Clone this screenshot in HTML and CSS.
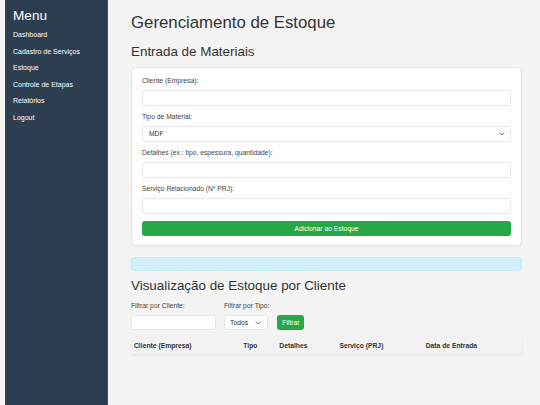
FILE: index.html
```html
<!DOCTYPE html>
<html lang="pt-BR">
<head>
<meta charset="utf-8">
<title>Gerenciamento de Estoque</title>
<link rel="stylesheet" href="styles.css">
</head>
<body>
<div class="layout">
  <aside class="sidebar">
    <h2 class="menu-title">Menu</h2>
    <ul class="menu">
      <li><a href="#">Dashboard</a></li>
      <li><a href="#">Cadastro de Serviços</a></li>
      <li><a href="#">Estoque</a></li>
      <li><a href="#">Controle de Etapas</a></li>
      <li><a href="#">Relatórios</a></li>
      <li><a href="#">Logout</a></li>
    </ul>
  </aside>
  <main class="main">
    <h1 class="page-title">Gerenciamento de Estoque</h1>
    <h2 class="section-title">Entrada de Materiais</h2>
    <form class="card">
      <label class="field-label">Cliente (Empresa):</label>
      <div class="field"></div>
      <label class="field-label">Tipo de Material:</label>
      <div class="field select">MDF<svg class="chev" viewBox="0 0 6 4" width="6" height="4"><path d="M0.6 0.8 L3 3 L5.4 0.8" fill="none" stroke="#555" stroke-width="0.8"/></svg></div>
      <label class="field-label">Detalhes (ex.: tipo, espessura, quantidade):</label>
      <div class="field"></div>
      <label class="field-label">Serviço Relacionado (Nº PRJ):</label>
      <div class="field"></div>
      <button type="button" class="btn-full">Adicionar ao Estoque</button>
    </form>
    <div class="info"></div>
    <h2 class="section-title second">Visualização de Estoque por Cliente</h2>
    <div class="filters">
      <div class="filter-group">
        <label class="field-label">Filtrar por Cliente:</label>
        <div class="field client-input"></div>
      </div>
      <div class="filter-group">
        <label class="field-label">Filtrar por Tipo:</label>
        <div class="field select type-select">Todos<svg class="chev" viewBox="0 0 6 4" width="6" height="4"><path d="M0.6 0.8 L3 3 L5.4 0.8" fill="none" stroke="#555" stroke-width="0.8"/></svg></div>
      </div>
      <button type="button" class="btn-small">Filtrar</button>
    </div>
    <table class="stock">
      <colgroup>
        <col class="c1"><col class="c2"><col class="c3"><col class="c4"><col class="c5">
      </colgroup>
      <thead>
        <tr><th>Cliente (Empresa)</th><th>Tipo</th><th>Detalhes</th><th>Serviço (PRJ)</th><th>Data de Entrada</th></tr>
      </thead>
    </table>
  </main>
</div>
</body>
</html>
```
FILE: styles.css
```css
* { box-sizing: border-box; }
html, body { margin: 0; padding: 0; }
body {
  background: #f4f4f4;
  font-family: "Liberation Sans", Arial, sans-serif;
  color: #333;
}
.layout {
  display: flex;
  min-height: 405px;
  padding-left: 5px;
}
.sidebar {
  width: 103px;
  flex: none;
  background: #2c3e50;
  color: #fff;
  padding: 8px 8px;
  border-right: 1px solid #45566a;
}
.menu-title {
  margin: 0;
  font-size: 13.6px;
  font-weight: normal;
  line-height: 16px;
}
.menu {
  list-style: none;
  margin: 3px 0 0;
  padding: 0;
}
.menu li {
  height: 16.6px;
  line-height: 16.6px;
  font-size: 7px;
}
.menu a { color: #fff; text-decoration: none; }
.main {
  flex: 1;
  padding: 0 18px 0 23px;
}
.page-title {
  margin: 13px 0 0;
  font-size: 16.8px;
  font-weight: normal;
  line-height: 20px;
  color: #333;
}
.section-title {
  margin: 11px 0 0;
  font-size: 13.4px;
  font-weight: normal;
  line-height: 16px;
  color: #333;
}
.section-title.second { margin-top: 7px; }
.card {
  margin-top: 7px;
  background: #fff;
  border: 1px solid #e4e4e4;
  border-radius: 5px;
  padding: 9px 10px 9px;
  box-shadow: 0 1px 2px rgba(0,0,0,0.04);
}
.field-label {
  display: block;
  font-size: 6.75px;
  line-height: 8px;
  color: #444;
  margin-bottom: 5px;
}
.field {
  height: 15.5px;
  background: #fff;
  border: 1px solid #e6e6e6;
  border-radius: 3px;
  margin-bottom: 7.5px;
}
.select {
  display: flex;
  align-items: center;
  justify-content: space-between;
  padding: 0 5px 0 6px;
  font-size: 6.75px;
  color: #333;
}
.btn-full {
  display: block;
  width: 100%;
  height: 15.5px;
  border: none;
  border-radius: 3px;
  background: #28a745;
  color: #fff;
  font-family: inherit;
  font-size: 6.75px;
  padding: 0;
  margin-top: -0.5px;
}
.info {
  margin-top: 10.5px;
  height: 14.5px;
  background: #d1f2fa;
  border: 1px solid #c2ecf5;
  border-radius: 3px;
}
.filters {
  margin-top: 8px;
  display: flex;
  align-items: flex-end;
  gap: 8px;
}
.filter-group .field { margin-bottom: 0; height: 15px; }
.client-input { width: 85px; }
.type-select { width: 44px; padding: 0 6px 0 5px; }
.btn-small {
  height: 15px;
  width: 27px;
  border: none;
  border-radius: 3px;
  background: #28a745;
  color: #fff;
  font-family: inherit;
  font-size: 6.75px;
  padding: 0;
}
.stock {
  margin-top: 7px;
  width: 100%;
  border-collapse: collapse;
  table-layout: fixed;
  background: #f2f2f2;
  box-shadow: 0 1px 3px rgba(0,0,0,0.08);
}
.stock th {
  height: 16.5px;
  padding: 0 3px;
  text-align: left;
  font-size: 6.75px;
  font-weight: bold;
  color: #333;
}
.c1 { width: 109px; }
.c2 { width: 36px; }
.c3 { width: 60px; }
.c4 { width: 86px; }
.c5 { width: 99px; }
```
